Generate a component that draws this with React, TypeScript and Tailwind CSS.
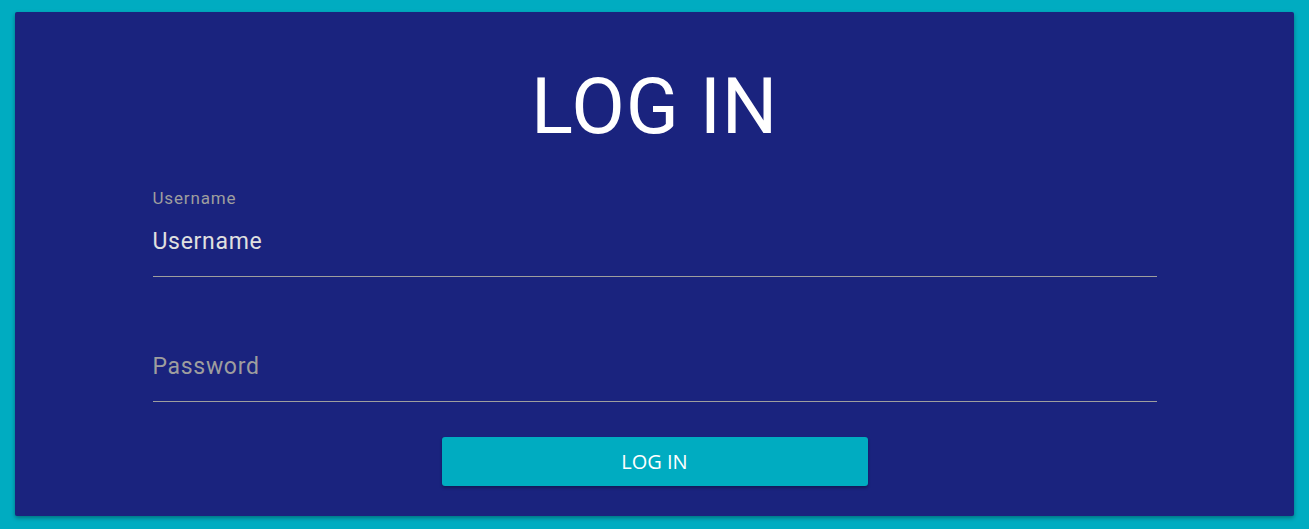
import React from 'react';

// Login card: cyan page, indigo panel, material-style underlined inputs.
const App: React.FC = () => {
  return (
    <div className="min-h-[529px] w-full bg-[#00acc1] px-[15px] pt-3" style={{ fontFamily: 'Roboto, "Noto Sans", sans-serif' }}>
      <div className="flex h-[504px] flex-col items-center rounded-[2px] bg-[#1a237e] pt-[56px] shadow-[0_2px_4px_rgba(0,0,0,0.35)]">
        <h1 className="text-[78px] leading-[78px] font-normal tracking-[0.01em] text-white">LOG IN</h1>

        <form className="mt-[42px] flex w-[1004px] flex-col items-center" onSubmit={e => e.preventDefault()}>
          <div className="w-full">
            <label className="block text-[17px] leading-[20px] tracking-[0.05em] text-[#9e9e9e]">Username</label>
            <input
              type="text"
              defaultValue="Username"
              className="block w-full border-b border-[#9e9e9e] bg-transparent pt-[20px] pb-[20px] text-[23px] leading-[28px] tracking-[0.03em] text-[#e0e0e0] outline-none"
            />
          </div>

          <div className="mt-[56px] w-full">
            <input
              type="password"
              placeholder="Password"
              className="block w-full border-b border-[#9e9e9e] bg-transparent pt-[20px] pb-[20px] text-[23px] leading-[28px] tracking-[0.03em] text-[#e0e0e0] outline-none placeholder:text-[#9e9e9e]"
            />
          </div>

          <button
            type="submit"
            className="mt-[35px] h-[49px] w-[426px] rounded-[3px] bg-[#00acc1] text-[20px] text-white shadow-[0_2px_3px_rgba(0,0,0,0.3)]"
            style={{ fontFamily: '"Open Sans", sans-serif' }}
          >
            LOG IN
          </button>
        </form>
      </div>
    </div>
  );
};

export default App;
